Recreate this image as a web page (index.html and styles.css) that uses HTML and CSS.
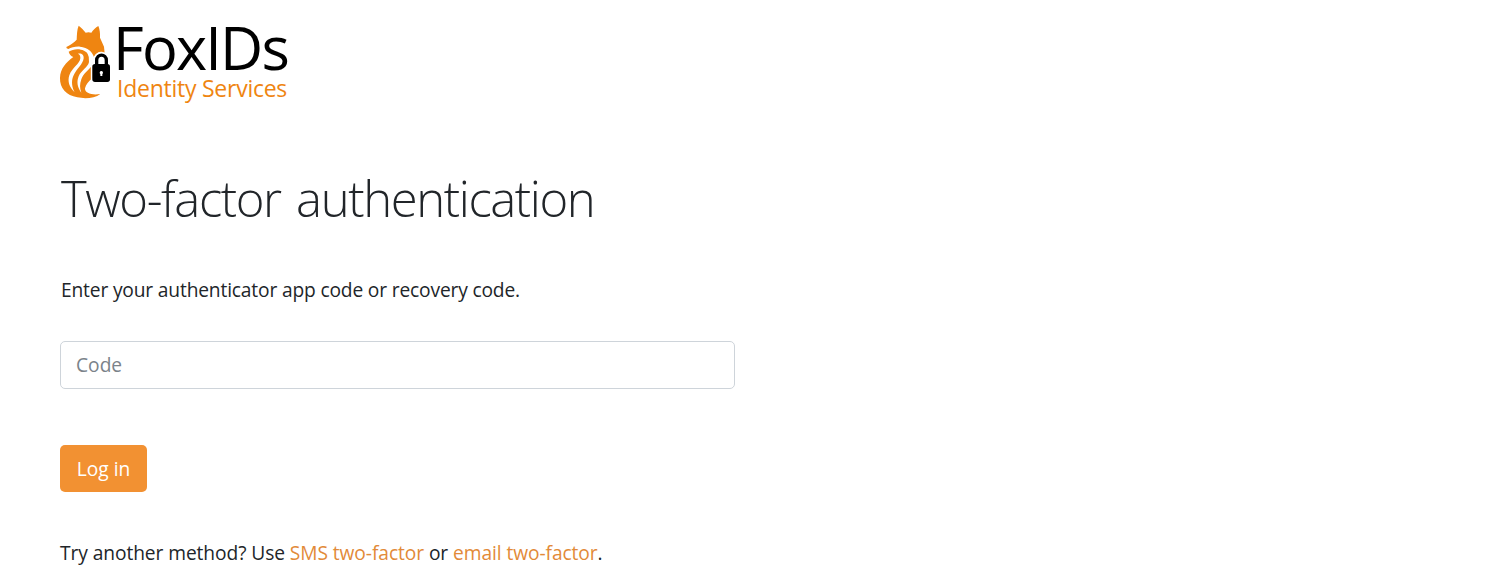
FILE: index.html
```html
<!DOCTYPE html>
<html lang="en">
<head>
<meta charset="utf-8">
<title>FoxIDs - Two-factor authentication</title>
<link rel="stylesheet" href="styles.css">
</head>
<body>
<main class="page">
  <header class="brand">
    <svg class="logo" viewBox="0 0 64 88" width="64" height="88" aria-hidden="true">
      <g transform="scale(.33333)">
        <path fill="#ef8511" d="M80 23C87 28 96 37 101 44Q109 42 118 44C123 36 131 29 139 24C143 34 145 46 144 59C148 68 152 77 156 86L158 106C150 98 136 99 126 118C121 101 108 88 84 86C70 85 57 89 49 93Q42 92 43 87C52 82 66 75 74 65C75 49 75 34 80 23Z"/>
        <path fill="#ef8511" d="M50 101C63 92 83 91 96 98C114 107 119 124 122 140V181C109 190 102 199 99 211C98 226 121 232 145 228C128 241 99 243 76 238C43 232 23 210 24 180C25 151 42 133 64 117Q53 113 50 101Z"/>
        <path fill="#fff" d="M78 107C89 105 96 111 95 121C93 139 73 153 64 174C57 190 60 208 68 223C52 208 46 190 52 172C60 149 83 139 85 121Q86 111 78 107Z"/>
        <path fill="#fff" d="M111 105C123 117 126 131 119 144C110 157 94 166 88 184C83 198 83 211 88 224C75 207 74 190 80 175C88 156 108 148 111 132Q113 118 106 105Z"/>
        <path fill="none" stroke="#fff" stroke-width="5" d="M119 188V145Q119 138 126 136V127C126 97 171 97 172 127V137"/>
        <path fill="#fff" d="M136 139V126C136 112 162 112 162 126V139Z"/>
        <path fill="none" stroke="#000" stroke-width="10" d="M134 141V127C134 106 163 106 163 127V141"/>
        <rect x="121" y="138" width="53" height="54" rx="8" fill="#000"/>
        <path fill="#fff" d="M148 159a5 5 0 0 0-3 9v6h6v-6a5 5 0 0 0-3-9"/>
      </g>
    </svg>
    <div class="brand-text">
      <div class="logo-name">FoxIDs</div>
      <div class="logo-tag">Identity Services</div>
    </div>
  </header>
  <h1 class="title">Two-factor authentication</h1>
  <p class="hint">Enter your authenticator app code or recovery code.</p>
  <form class="form">
    <input class="code" type="text" placeholder="Code" aria-label="Code">
    <button class="submit" type="button">Log in</button>
  </form>
  <p class="alternatives">Try another method? Use <a href="#" class="link">SMS two-factor</a> or <a href="#" class="link">email two-factor</a>.</p>
</main>
</body>
</html>
```
FILE: styles.css
```css
* { box-sizing: border-box; }
body {
  margin: 0;
  height: 577px;
  overflow: hidden;
  background: #fff;
  color: #212529;
  font: 19.2px/30px "Open Sans", "Noto Sans", sans-serif;
}
.page { width: 735px; padding: 18px 0 0 60px; }
.brand { display: flex; height: 88px; margin-left: -8px; white-space: nowrap; }
.logo { display: block; flex: none; }
.brand-text { margin-left: -1px; }
.logo-name {
  font-size: 59.5px;
  line-height: 58px;
  letter-spacing: -1.8px;
  text-indent: -2px;
  color: #000;
}
.logo-tag {
  font-size: 23px;
  line-height: 24px;
  letter-spacing: -0.25px;
  text-indent: 2px;
  color: #ef8511;
}
.title {
  margin: 62px 0 0;
  font: 300 49px/60px "Open Sans", "Noto Sans", sans-serif;
  letter-spacing: -1.4px;
  word-spacing: 4px;
  text-indent: 1px;
  white-space: nowrap;
}
.hint { margin: 47px 0 0; white-space: nowrap; letter-spacing: -0.16px; text-indent: 1px; }
.form { display: flex; flex-direction: column; align-items: flex-start; margin-top: 36px; }
.code {
  width: 100%;
  height: 48px;
  padding: 0 15px 2px;
  border: 1px solid #ced4da;
  border-radius: 5px;
  font: inherit;
  color: #212529;
}
.code::placeholder { color: #7b838a; opacity: 1; }
.submit {
  width: 87px;
  height: 47px;
  margin-top: 56px;
  padding: 0;
  border: 0;
  border-radius: 5px;
  background: #f29132;
  color: #fff;
  font: inherit;
}
.alternatives { margin: 46px 0 0; white-space: nowrap; letter-spacing: -0.08px; }
.link { color: #e28a38; text-decoration: none; }
```
